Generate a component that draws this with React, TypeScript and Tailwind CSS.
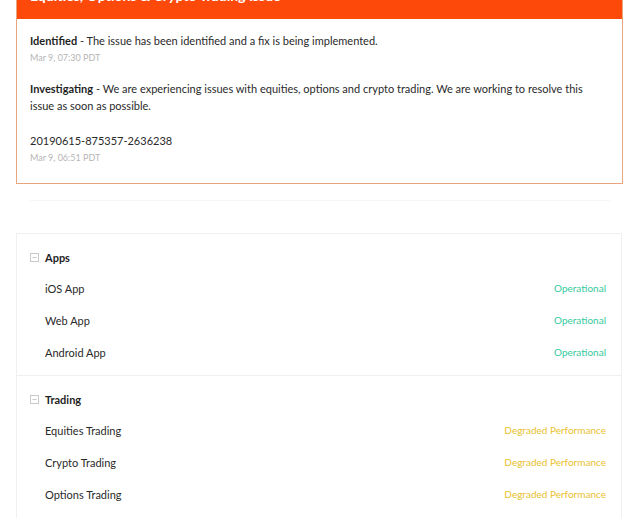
import React from "react";

const font = { fontFamily: "Lato, 'Liberation Sans', Arial, sans-serif" };

function MinusBox() {
  return (
    <svg width="9" height="9" viewBox="0 0 9 9" className="shrink-0">
      <rect x="0.5" y="0.5" width="8" height="8" fill="none" stroke="#c9c9c9" strokeWidth="1" />
      <line x1="2.5" y1="4.5" x2="6.5" y2="4.5" stroke="#c9c9c9" strokeWidth="1" />
    </svg>
  );
}

type Row = { name: string; status: "ok" | "degraded" };

function Group({ title, rows, last }: { title: string; rows: Row[]; last?: boolean }) {
  return (
    <div className={`pl-[13px] pr-[15px] pt-[15px] pb-[14px] ${last ? "" : "border-b border-[#f0f0f0]"}`}>
      <div className="flex items-center gap-[6px] mb-[14px] h-[17px]">
        <MinusBox />
        <span className="text-[11px] font-bold text-[#1f1f1f] leading-[17px]">{title}</span>
      </div>
      <div className="flex flex-col gap-[15px] pl-[15px]">
        {rows.map((r) => (
          <div key={r.name} className="flex items-center justify-between h-[17px]">
            <span className="text-[11px] text-[#2a2a2a] leading-[17px]">{r.name}</span>
            <span
              className={`text-[10px] leading-[17px] ${
                r.status === "ok" ? "text-[#36c99e]" : "text-[#e9c12c]"
              }`}
            >
              {r.status === "ok" ? "Operational" : "Degraded Performance"}
            </span>
          </div>
        ))}
      </div>
    </div>
  );
}

export default function App() {
  return (
    <div className="w-[640px] h-[518px] overflow-hidden bg-white" style={font}>
      <div className="mx-[16px] w-[607px] mt-[-22px] border border-[#e9a57e]">
        <div className="bg-[#fd4a0b] h-[40px] px-[13px] pt-[8px]">
          <div className="text-white font-bold text-[14px] leading-[17px]">
            Equities, Options &amp; Crypto Trading Issue
          </div>
        </div>
        <div className="px-[13px] pt-[13px] pb-[17px] text-[#2a2a2a]">
          <div className="text-[11px] leading-[17px]">
            <span className="font-bold text-[#1f1f1f]">Identified</span> - The issue has been identified and a fix is being implemented.
          </div>
          <div className="text-[9px] leading-[17px] text-[#b5b5b5]">Mar 9, 07:30 PDT</div>
          <div className="text-[11px] leading-[17px] mt-[14px]">
            <span className="font-bold text-[#1f1f1f]">Investigating</span> - We are experiencing issues with equities, options and crypto trading. We are working to resolve this issue as soon as possible.
          </div>
          <div className="text-[11px] leading-[17px] mt-[18px]">20190615-875357-2636238</div>
          <div className="text-[9px] leading-[17px] text-[#b5b5b5]">Mar 9, 06:51 PDT</div>
        </div>
      </div>
      <div className="mx-[30px] mt-[16px] h-px bg-[#f6f6f6]" />
      <div className="mx-[16px] w-[606px] mt-[32px] border border-[#f0f0f0]">
        <Group
          title="Apps"
          rows={[
            { name: "iOS App", status: "ok" },
            { name: "Web App", status: "ok" },
            { name: "Android App", status: "ok" },
          ]}
        />
        <Group
          title="Trading"
          rows={[
            { name: "Equities Trading", status: "degraded" },
            { name: "Crypto Trading", status: "degraded" },
            { name: "Options Trading", status: "degraded" },
            { name: "Instant Deposits", status: "ok" },
          ]}
          last
        />
      </div>
    </div>
  );
}
